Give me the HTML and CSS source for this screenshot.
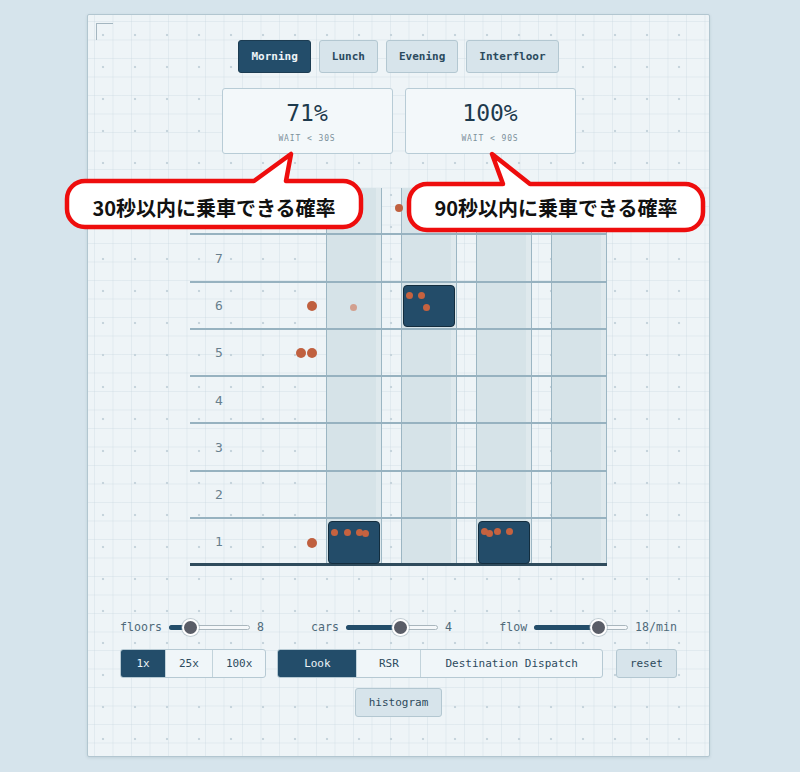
FILE: index.html
```html
<!DOCTYPE html>
<html lang="ja">
<head>
<meta charset="utf-8">
<title>Elevator dispatch</title>
<link rel="stylesheet" href="styles.css">
</head>
<body>
<main class="sim">
  <span class="corner"></span>

  <nav class="scenarios">
    <button class="btn btn--active">Morning</button>
    <button class="btn">Lunch</button>
    <button class="btn">Evening</button>
    <button class="btn">Interfloor</button>
  </nav>

  <section class="stats">
    <div class="stat">
      <div class="stat__value">71%</div>
      <div class="stat__label">WAIT &lt; 30S</div>
    </div>
    <div class="stat">
      <div class="stat__value">100%</div>
      <div class="stat__label">WAIT &lt; 90S</div>
    </div>
  </section>

  <section class="building">
    <div class="shaft shaft--1"></div>
    <div class="shaft shaft--2"></div>
    <div class="shaft shaft--3"></div>
    <div class="shaft shaft--4"></div>

    <div class="floor floor--8"></div>
    <div class="floor floor--7"><span class="floor__num">7</span></div>
    <div class="floor floor--6"><span class="floor__num">6</span></div>
    <div class="floor floor--5"><span class="floor__num">5</span></div>
    <div class="floor floor--4"><span class="floor__num">4</span></div>
    <div class="floor floor--3"><span class="floor__num">3</span></div>
    <div class="floor floor--2"><span class="floor__num">2</span></div>
    <div class="floor floor--1 floor--ground"><span class="floor__num">1</span></div>

    <div class="queue queue--6"><i class="pax"></i></div>
    <div class="queue queue--5"><i class="pax"></i><i class="pax"></i></div>
    <div class="queue queue--1"><i class="pax"></i></div>

    <i class="pax pax--walking"></i>
    <i class="pax pax--leaving"></i>

    <div class="car car--a">
      <i class="rider" style="left:3.5px;top:8.5px"></i>
      <i class="rider" style="left:16.5px;top:8.5px"></i>
      <i class="rider" style="left:28.5px;top:8.5px"></i>
      <i class="rider" style="left:34.5px;top:9px"></i>
    </div>
    <div class="car car--b">
      <i class="rider" style="left:3.5px;top:7.5px"></i>
      <i class="rider" style="left:15.5px;top:7.5px"></i>
      <i class="rider" style="left:20.5px;top:19.5px"></i>
    </div>
    <div class="car car--c">
      <i class="rider" style="left:3.5px;top:7.5px"></i>
      <i class="rider" style="left:8.5px;top:9.5px"></i>
      <i class="rider" style="left:16.5px;top:7.5px"></i>
      <i class="rider" style="left:28.5px;top:7.5px"></i>
    </div>
  </section>

  <section class="sliders">
    <label class="slider">
      <span class="slider__name">floors</span>
      <span class="slider__track slider__track--floors"><span class="slider__fill" style="width:26%"></span><span class="slider__knob" style="left:26%"></span></span>
      <span class="slider__value">8</span>
    </label>
    <label class="slider">
      <span class="slider__name">cars</span>
      <span class="slider__track slider__track--cars"><span class="slider__fill" style="width:59%"></span><span class="slider__knob" style="left:59%"></span></span>
      <span class="slider__value">4</span>
    </label>
    <label class="slider">
      <span class="slider__name">flow</span>
      <span class="slider__track slider__track--flow"><span class="slider__fill" style="width:69%"></span><span class="slider__knob" style="left:69%"></span></span>
      <span class="slider__value">18/min</span>
    </label>
  </section>

  <section class="toolbar">
    <div class="seg seg--speed">
      <button class="seg__item seg__item--active">1x</button>
      <button class="seg__item">25x</button>
      <button class="seg__item">100x</button>
    </div>
    <div class="seg seg--algo">
      <button class="seg__item seg__item--active seg__item--look">Look</button>
      <button class="seg__item seg__item--rsr">RSR</button>
      <button class="seg__item seg__item--dd">Destination Dispatch</button>
    </div>
    <button class="btn btn--small">reset</button>
  </section>

  <div class="extra">
    <button class="btn btn--small">histogram</button>
  </div>

  <div class="callout callout--left">
    <svg class="callout__shape" width="302" height="80" viewBox="0 0 302 80">
      <path d="M22 30 H191 L228 3 L223 30 H280 A18 18 0 0 1 298 48 V58 A18 18 0 0 1 280 76 H22 A18 18 0 0 1 4 58 V48 A18 18 0 0 1 22 30 Z"/>
    </svg>
    <span class="callout__text">30秒以内に乗車できる確率</span>
  </div>
  <div class="callout callout--right">
    <svg class="callout__shape" width="302" height="82" viewBox="0 0 302 82">
      <path d="M22 33 H98 L87 3 L125 33 H280 A18 18 0 0 1 298 51 V61 A18 18 0 0 1 280 79 H22 A18 18 0 0 1 4 61 V51 A18 18 0 0 1 22 33 Z"/>
    </svg>
    <span class="callout__text">90秒以内に乗車できる確率</span>
  </div>
</main>
</body>
</html>
```

FILE: styles.css
```css
* { box-sizing: border-box; }

html, body {
  margin: 0;
  padding: 0;
}

body {
  background: #d6e4ec;
  font-family: "DejaVu Sans Mono", "Liberation Mono", monospace;
  color: #2a4a5e;
  min-height: 772px;
  padding: 14px 0 0 87px;
}

button {
  font-family: inherit;
  cursor: pointer;
}

/* ---------- panel ---------- */
.sim {
  position: relative;
  width: 623px;
  height: 743px;
  border: 1px solid #b2c6d0;
  border-radius: 2px;
  box-shadow: 0 1px 3px rgba(40, 70, 90, 0.12);
  background-color: #eef4f7;
  background-image:
    radial-gradient(circle at 15px 20px, #c6d4dc 0.9px, transparent 1.6px),
    linear-gradient(90deg, rgba(196, 212, 221, 0.32) 1px, transparent 1px),
    linear-gradient(rgba(196, 212, 221, 0.32) 1px, transparent 1px);
  background-size: 32px 32px, 18.5px 18.5px, 18.5px 18.5px;
  background-position: 0 0, 6px 0, 0 6px;
  padding: 25px 33px 0;
  display: flex;
  flex-direction: column;
  align-items: center;
}

.corner {
  position: absolute;
  left: 8px;
  top: 8px;
  width: 17px;
  height: 17px;
  border-top: 1.5px solid #a4b6c0;
  border-left: 1.5px solid #a4b6c0;
}

/* ---------- buttons ---------- */
.btn {
  height: 33px;
  padding: 0 12px;
  border: 1px solid #b3c7d1;
  border-radius: 3px;
  background: #d7e4eb;
  color: #2b4a5e;
  font-size: 11px;
  font-weight: bold;
}

.btn--active {
  background: #234d6a;
  border-color: #1c3c52;
  color: #eef4f8;
}

.btn--small {
  height: 29px;
  padding: 0 13px;
  font-weight: normal;
  color: #2d4a5c;
}

.scenarios {
  display: flex;
  gap: 8px;
}

/* ---------- stats ---------- */
.stats {
  display: flex;
  gap: 12px;
  margin-top: 15px;
}

.stat {
  width: 171px;
  height: 66px;
  border: 1px solid #b8ccd6;
  border-radius: 3px;
  background: #f3f8fa;
  display: flex;
  flex-direction: column;
  align-items: center;
  padding-top: 10px;
}

.stat__value {
  font-size: 23px;
  line-height: 28px;
  color: #1d3a4d;
}

.stat__label {
  margin-top: 7px;
  font-size: 8px;
  letter-spacing: 0.9px;
  color: #7d919c;
}

/* ---------- building ---------- */
.building {
  margin-top: 34px;
  display: grid;
  grid-template-columns: 58px 78px 55.5px 19.5px 55.5px 19.5px 55.5px 19.5px 55.5px;
  grid-template-rows: repeat(8, 47.25px);
  width: 417px;
  position: relative;
}

.shaft {
  grid-row: 1 / -1;
  background: #d6e3e8;
  border-left: 1.5px solid #9cb6c3;
  border-right: 1.5px solid #9cb6c3;
  box-shadow: inset -5px 0 0 #dfe9ed;
  z-index: 0;
}
.shaft--1 { grid-column: 3; }
.shaft--2 { grid-column: 5; }
.shaft--3 { grid-column: 7; }
.shaft--4 { grid-column: 9; }

.floor {
  grid-column: 1 / -1;
  border-bottom: 2px solid #97b2c0;
  display: flex;
  align-items: center;
  z-index: 1;
}
.floor--8 { grid-row: 1; }
.floor--7 { grid-row: 2; }
.floor--6 { grid-row: 3; }
.floor--5 { grid-row: 4; }
.floor--4 { grid-row: 5; }
.floor--3 { grid-row: 6; }
.floor--2 { grid-row: 7; }
.floor--1 { grid-row: 8; }

.floor--ground {
  border-bottom: 3px solid #2f4b5c;
}

.floor__num {
  width: 58px;
  text-align: center;
  font-size: 13px;
  color: #687f8d;
  padding-top: 1px;
}

.queue {
  grid-column: 2;
  display: flex;
  justify-content: flex-end;
  align-items: center;
  gap: 1px;
  padding-right: 9px;
  z-index: 2;
}
.queue--6 { grid-row: 3; }
.queue--5 { grid-row: 4; }
.queue--1 { grid-row: 8; padding-top: 2px; }

.pax {
  display: block;
  width: 10px;
  height: 10px;
  border-radius: 50%;
  background: #c0603f;
}

.pax--walking {
  grid-column: 4;
  grid-row: 1;
  width: 8px;
  height: 8px;
  justify-self: end;
  align-self: center;
  margin: 0 -2px 8px 0;
  z-index: 2;
}

.pax--leaving {
  grid-column: 3;
  grid-row: 3;
  width: 7px;
  height: 7px;
  justify-self: center;
  align-self: center;
  margin-top: 3px;
  background: #d2a08f;
  z-index: 2;
}

.car {
  position: relative;
  margin: 2px 2px 2px 2px;
  background: #234c69;
  border: 1.5px solid #132d3e;
  border-radius: 4px;
  z-index: 3;
}
.car--a { grid-column: 3; grid-row: 8; margin-bottom: 2px; margin-top: 2.5px; }
.car--b { grid-column: 5; grid-row: 3; margin-bottom: 3px; }
.car--c { grid-column: 7; grid-row: 8; margin-bottom: 2px; margin-top: 2.5px; }

.rider {
  position: absolute;
  width: 7px;
  height: 7px;
  border-radius: 50%;
  background: #c6623f;
  margin: -1.5px 0 0 -1.5px;
}

/* ---------- sliders ---------- */
.sliders {
  width: 557px;
  margin-top: 53px;
  display: flex;
  justify-content: space-between;
  align-items: center;
  height: 16px;
}

.slider {
  display: flex;
  align-items: center;
  gap: 7px;
  font-size: 11.6px;
  color: #4f6a7a;
}

.slider__track {
  position: relative;
  height: 5px;
  border: 1px solid #a9b6bd;
  border-radius: 3px;
  background: #f5f8fa;
}
.slider__track--floors { width: 81px; }
.slider__track--cars { width: 92px; }
.slider__track--flow { width: 94px; }

.slider__fill {
  position: absolute;
  left: -1px;
  top: -1px;
  bottom: -1px;
  background: #234d6a;
  border-radius: 3px 0 0 3px;
}

.slider__knob {
  position: absolute;
  top: 50%;
  width: 17px;
  height: 17px;
  margin: -8.5px 0 0 -8.5px;
  border-radius: 50%;
  background: #5a5d67;
  border: 2px solid #ffffff;
  box-shadow: 0 0 0 1px rgba(150, 165, 175, 0.5);
}

/* ---------- toolbar ---------- */
.toolbar {
  width: 557px;
  margin-top: 14px;
  display: flex;
  align-items: center;
  gap: 11px;
}

.seg {
  display: flex;
  height: 29px;
  border: 1px solid #b6c9d3;
  border-radius: 3px;
  background: #f0f6f9;
  overflow: hidden;
}

.seg__item {
  border: 0;
  border-left: 1px solid #c2d3db;
  background: transparent;
  padding: 0 13px;
  min-width: 44px;
  font-size: 11px;
  color: #2d4b5e;
}
.seg__item:first-child { border-left: 0; }

.seg__item--active {
  background: #234d6a;
  color: #eef4f8;
}

.seg--algo {
  flex: 1;
  margin-right: 2px;
}
.seg__item--look { width: 78px; }
.seg__item--rsr { width: 64px; }
.seg__item--dd { flex: 1; }

.extra {
  margin-top: 10px;
}

/* ---------- annotations ---------- */
.callout {
  position: absolute;
  z-index: 10;
}
.callout--left {
  left: -25px;
  top: 136px;
  width: 302px;
  height: 80px;
}
.callout--right {
  left: 317px;
  top: 136px;
  width: 302px;
  height: 82px;
}

.callout__shape {
  position: absolute;
  left: 0;
  top: 0;
}
.callout__shape path {
  fill: #ffffff;
  stroke: #ee0d0d;
  stroke-width: 4.5;
  stroke-linejoin: round;
}

.callout__text {
  position: absolute;
  left: 0;
  right: 0;
  bottom: 0;
  height: 46px;
  display: flex;
  align-items: center;
  justify-content: center;
  font-family: "Noto Sans CJK JP", sans-serif;
  font-weight: bold;
  font-size: 20px;
  color: #111111;
  padding-bottom: 2px;
}
.callout--right .callout__text { height: 49px; }
```
